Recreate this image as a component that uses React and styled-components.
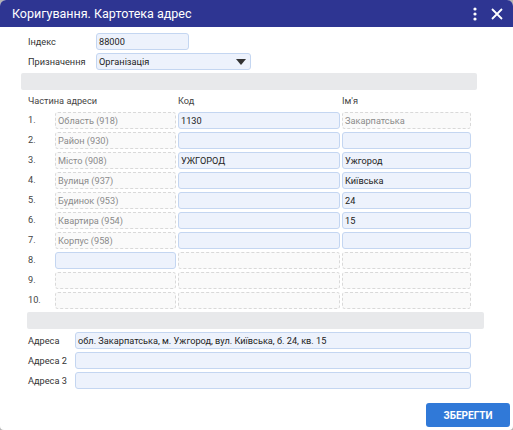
import React from "react";
import styled, { createGlobalStyle } from "styled-components";

const rows = [
  { part: "Область (918)", code: "1130", name: "Закарпатська", codeOn: true, nameOn: false },
  { part: "Район (930)", code: "", name: "", codeOn: true, nameOn: true },
  { part: "Місто (908)", code: "УЖГОРОД", name: "Ужгород", codeOn: true, nameOn: true },
  { part: "Вулиця (937)", code: "", name: "Київська", codeOn: true, nameOn: true },
  { part: "Будинок (953)", code: "", name: "24", codeOn: true, nameOn: true },
  { part: "Квартира (954)", code: "", name: "15", codeOn: true, nameOn: true },
  { part: "Корпус (958)", code: "", name: "", codeOn: true, nameOn: true },
  { part: "", code: "", name: "", partOn: true },
  { part: "", code: "", name: "" },
  { part: "", code: "", name: "" },
];

const addresses = [
  { label: "Адреса", value: "обл. Закарпатська, м. Ужгород, вул. Київська, б. 24, кв. 15" },
  { label: "Адреса 2", value: "" },
  { label: "Адреса 3", value: "" },
];

const App = () => (
  <>
    <GlobalStyle />
    <Window>
      <TitleBar>
        <Title>Коригування. Картотека адрес</Title>
        <TitleIcons>
          <svg width="6" height="14" viewBox="0 0 6 14">
            <circle cx="3" cy="2" r="1.6" fill="#fff" />
            <circle cx="3" cy="7" r="1.6" fill="#fff" />
            <circle cx="3" cy="12" r="1.6" fill="#fff" />
          </svg>
          <svg width="12" height="12" viewBox="0 0 12 12">
            <path d="M1 1 L11 11 M11 1 L1 11" stroke="#fff" strokeWidth="1.8" />
          </svg>
        </TitleIcons>
      </TitleBar>

      <Body>
        <FieldRow>
          <Label>Індекс</Label>
          <Input width="93px">88000</Input>
        </FieldRow>
        <FieldRow>
          <Label>Призначення</Label>
          <Select>
            <span>Організація</span>
            <svg width="10" height="6" viewBox="0 0 10 6">
              <path d="M0 0 L10 0 L5 6 Z" fill="#333" />
            </svg>
          </Select>
        </FieldRow>

        <Divider offset="-7px" width="456px" />

        <PartsGrid>
          <HeadCell span={2}>Частина адреси</HeadCell>
          <HeadCell>Код</HeadCell>
          <HeadCell>Ім'я</HeadCell>
          {rows.map((r, i) => (
            <React.Fragment key={i}>
              <RowNum>{i + 1}.</RowNum>
              <Box filled={r.partOn} muted>{r.part}</Box>
              <Box filled={r.codeOn}>{r.code}</Box>
              <Box filled={r.nameOn} muted={!r.nameOn}>{r.name}</Box>
            </React.Fragment>
          ))}
        </PartsGrid>

        <Divider offset="-1px" width="457px" />

        <AddressList>
          {addresses.map((a) => (
            <AddressRow key={a.label}>
              <Label>{a.label}</Label>
              <Input width="396px">{a.value}</Input>
            </AddressRow>
          ))}
        </AddressList>
      </Body>

      <Footer>
        <SaveButton>ЗБЕРЕГТИ</SaveButton>
      </Footer>
    </Window>
  </>
);

// Styled Components

const GlobalStyle = createGlobalStyle`
  html, body {
    margin: 0;
    padding: 0;
    background: #b4b4b4;
  }
  body {
    font-family: Roboto, "Liberation Sans", Arial, sans-serif;
  }
`;

const Window = styled.div`
  width: 513px;
  height: 430px;
  background: #ffffff;
  border-radius: 6px 6px 4px 4px;
  overflow: hidden;
  display: flex;
  flex-direction: column;
`;

const TitleBar = styled.div`
  height: 27px;
  flex-shrink: 0;
  background: #2e3592;
  display: flex;
  align-items: center;
  justify-content: space-between;
  padding: 0 10px 0 12px;
`;

const Title = styled.div`
  color: #ffffff;
  font-size: 12.5px;
`;

const TitleIcons = styled.div`
  display: flex;
  align-items: center;
  gap: 13px;
`;

const Body = styled.div`
  padding: 6px 0 0 28px;
  display: flex;
  flex-direction: column;
`;

const FieldRow = styled.div`
  display: flex;
  align-items: center;
  height: 17px;
  margin-bottom: 3px;
`;

const Label = styled.div`
  width: 68px;
  flex-shrink: 0;
  font-size: 9.2px;
  color: #333;
`;

const Input = styled.div`
  width: ${(p) => p.width};
  height: 17px;
  box-sizing: border-box;
  background: #edf2fc;
  border: 1px solid #c4d6f1;
  border-radius: 3px;
  font-size: 9.2px;
  color: #222;
  line-height: 15px;
  padding: 0 2px;
  white-space: nowrap;
  overflow: hidden;
`;

const Select = styled(Input)`
  width: 155px;
  display: flex;
  align-items: center;
  justify-content: space-between;
  padding: 0 4px 0 2px;
`;

const Divider = styled.div`
  height: 17px;
  width: ${(p) => p.width};
  margin-left: ${(p) => p.offset};
  background: #e8e9eb;
  border-radius: 2px;
`;

const PartsGrid = styled.div`
  display: grid;
  grid-template-columns: 25px 121px 162px 129px;
  grid-auto-rows: 17px;
  column-gap: 2px;
  row-gap: 3px;
  margin: 2px 0 3px;
`;

const HeadCell = styled.div`
  grid-column: span ${(p) => p.span || 1};
  font-size: 9.2px;
  color: #444;
  line-height: 17px;
`;

const RowNum = styled.div`
  font-size: 9.2px;
  color: #444;
  line-height: 15px;
`;

const Box = styled.div`
  box-sizing: border-box;
  height: 17px;
  border-radius: 3px;
  font-size: 9.2px;
  line-height: 15px;
  padding: 0 2px;
  white-space: nowrap;
  overflow: hidden;
  color: ${(p) => (p.muted ? "#8a8a8a" : "#222")};
  background: ${(p) => (p.filled ? "#edf2fc" : "#fafafa")};
  border: 1px ${(p) => (p.filled ? "solid #c4d6f1" : "dashed #d9d9d9")};
`;

const AddressList = styled.div`
  display: flex;
  flex-direction: column;
  gap: 3px;
  margin-top: 3px;
`;

const AddressRow = styled.div`
  display: flex;
  align-items: center;

  & > ${Label} {
    width: 47px;
  }
`;

const Footer = styled.div`
  margin-top: auto;
  display: flex;
  justify-content: flex-end;
  padding: 0 3px 3px 0;
`;

const SaveButton = styled.button`
  width: 84px;
  height: 24px;
  border: none;
  border-radius: 3px;
  background: #3079d8;
  color: #ffffff;
  font-family: Roboto, "Liberation Sans", Arial, sans-serif;
  font-size: 10px;
  font-weight: bold;
  cursor: pointer;
`;

export default App;
